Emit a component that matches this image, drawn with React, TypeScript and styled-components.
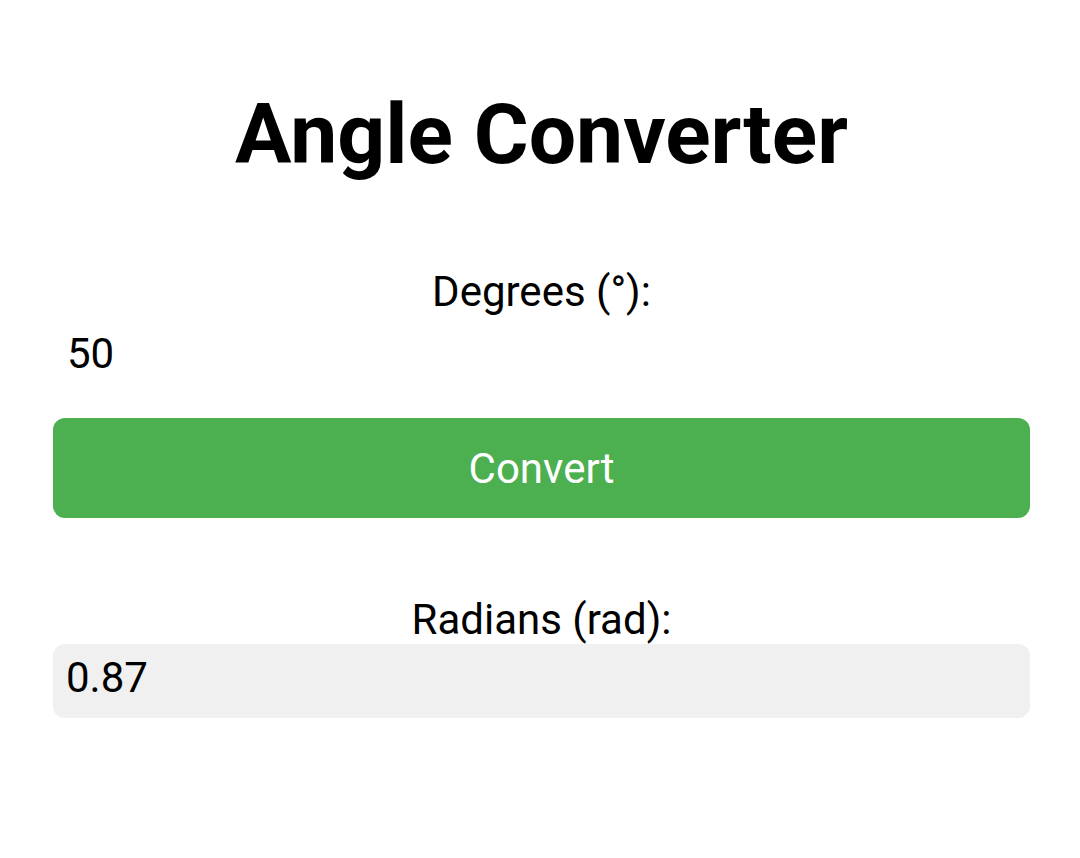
import styled, { createGlobalStyle } from "styled-components";
import { useState } from "react";

const GlobalStyle = createGlobalStyle`
    html, body {
        margin: 0;
        padding: 0;
        background: #ffffff;
    }

    body {
        font-family: Roboto, "Noto Sans", "Liberation Sans", sans-serif;
        color: #000000;
    }
`;

const Page = styled.main`
    display: flex;
    flex-direction: column;
    align-items: stretch;
    padding: 85px 50px 40px 53px;
`;

const Title = styled.h1`
    margin: 0 0 83px;
    font-size: 84px;
    font-weight: 700;
    line-height: normal;
    text-align: center;
`;

const Label = styled.label`
    display: block;
    font-size: 42px;
    line-height: 49px;
    text-align: center;
`;

const Field = styled.input`
    display: block;
    box-sizing: border-box;
    width: 100%;
    margin: 0;
    padding: 13px 14px;
    border: none;
    outline: none;
    background: transparent;
    font-family: inherit;
    font-size: 42px;
    line-height: 49px;
    color: #000000;
`;

const ConvertButton = styled.button`
    display: flex;
    align-items: center;
    justify-content: center;
    height: 100px;
    margin: 27px 0 77px;
    border: none;
    border-radius: 12px;
    background: #4caf50;
    color: #ffffff;
    font-family: inherit;
    font-size: 42px;
    cursor: pointer;
`;

const Result = styled.div`
    box-sizing: border-box;
    height: 74px;
    padding: 9px 13px 0;
    border-radius: 12px;
    background: #f0f0f0;
    font-size: 42px;
    line-height: 49px;
`;

const App = () => {
    const [degrees, setDegrees] = useState("50");
    const [radians, setRadians] = useState("0.87");

    const handleConvert = () => {
        const value = parseFloat(degrees);
        if (Number.isNaN(value)) {
            setRadians("");
            return;
        }
        setRadians(((value * Math.PI) / 180).toFixed(2));
    };

    return (
        <Page>
            <GlobalStyle/>
            <Title>Angle Converter</Title>
            <Label htmlFor="degrees">Degrees (°):</Label>
            <Field
                id="degrees"
                type="text"
                value={degrees}
                onChange={(e) => setDegrees(e.target.value)}
            />
            <ConvertButton onClick={handleConvert}>Convert</ConvertButton>
            <Label>Radians (rad):</Label>
            <Result>{radians}</Result>
        </Page>
    );
};

export default App;
